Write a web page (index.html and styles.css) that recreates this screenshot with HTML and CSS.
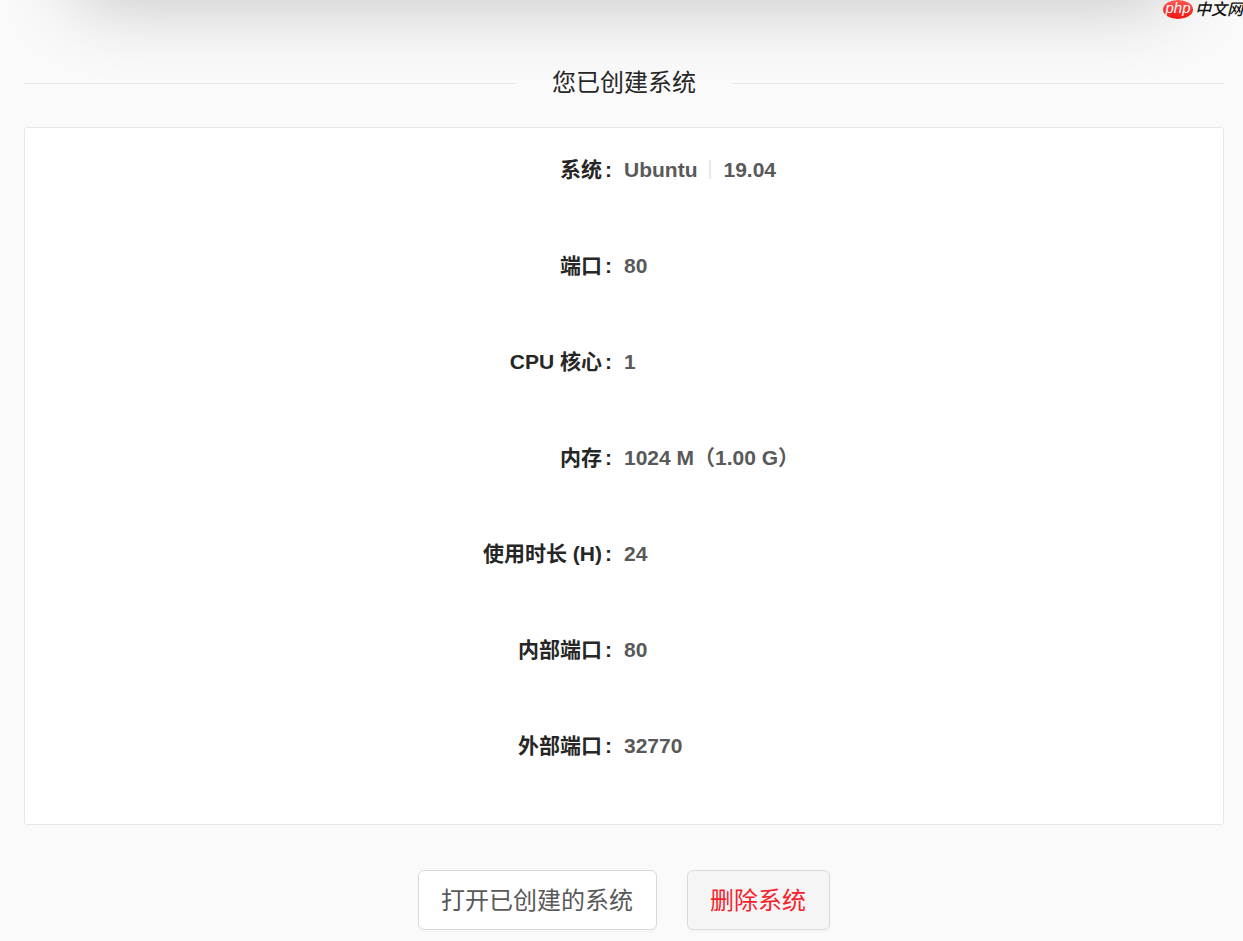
FILE: index.html
```html
<!DOCTYPE html>
<html lang="zh-CN">
<head>
  <meta charset="utf-8">
  <meta name="viewport" content="width=device-width, initial-scale=1">
  <title>您已创建系统</title>
  <link rel="stylesheet" href="styles.css">
</head>
<body>
  <div class="overhang" aria-hidden="true"></div>
  <div class="brand"><span class="brand-badge">php</span><span class="brand-name">中文网</span></div>
  <main class="page">
    <h1 class="divider-title">您已创建系统</h1>
    <dl class="details">
      <div class="row"><dt>系统</dt><dd>Ubuntu<span class="bar"></span>19.04</dd></div>
      <div class="row"><dt>端口</dt><dd>80</dd></div>
      <div class="row"><dt>CPU 核心</dt><dd>1</dd></div>
      <div class="row"><dt>内存</dt><dd>1024 M（1.00 G）</dd></div>
      <div class="row"><dt>使用时长 (H)</dt><dd>24</dd></div>
      <div class="row"><dt>内部端口</dt><dd>80</dd></div>
      <div class="row"><dt>外部端口</dt><dd>32770</dd></div>
    </dl>
    <div class="actions">
      <button type="button" class="btn">打开已创建的系统</button>
      <button type="button" class="btn btn-danger">删除系统</button>
    </div>
  </main>
</body>
</html>
```
FILE: styles.css
```css
* {
  box-sizing: border-box;
}

body {
  position: relative;
  margin: 0;
  overflow-x: hidden;
  background: #fafafa;
  color: #262626;
  font-family: "Liberation Sans", "Noto Sans CJK SC", sans-serif;
}

/* Panel above the visible area; only its shadow reaches the page. */
.overhang {
  position: absolute;
  bottom: 100%;
  left: 76px;
  right: 71px;
  height: 200px;
  box-shadow: 0 0 80px rgba(0, 0, 0, 0.24);
}

.brand {
  position: absolute;
  top: 0;
  right: 0;
  display: flex;
  align-items: center;
  gap: 2px;
  height: 19px;
  color: #111;
  font-style: italic;
  line-height: 19px;
  white-space: nowrap;
}

.brand-badge {
  width: 30px;
  height: 19px;
  border-radius: 50%;
  background: linear-gradient(#ff5a50, #f01414);
  color: #fff;
  font-size: 15px;
  line-height: 16px;
  text-align: center;
}

.brand-name {
  font-size: 16px;
  font-weight: 500;
}

.page {
  position: relative;
  padding: 65px 19px 11px 24px;
}

.divider-title {
  display: flex;
  align-items: center;
  gap: 36px;
  margin: 0 0 26px;
  font-size: 24px;
  font-weight: 400;
  line-height: 36px;
}

.divider-title::before,
.divider-title::after {
  content: "";
  flex: 1;
  height: 1px;
  background: #e8e8e8;
}

.details {
  margin: 0;
  padding: 12px 0;
  border: 1px solid #e8e8e8;
  border-radius: 3px;
  background: #fff;
  font-size: 21px;
  font-weight: bold;
  line-height: 60px;
}

.row {
  display: grid;
  grid-template-columns: 1fr 1fr;
  height: 60px;
  margin-bottom: 36px;
}

.row dt {
  padding-right: 12px;
  text-align: right;
}

.row dt::after {
  content: ":";
  margin-left: 3px;
}

.row dd {
  margin: 0;
  color: #595959;
}

.bar {
  display: inline-block;
  width: 2px;
  height: 19px;
  margin: 0 12px;
  background: #e8e8e8;
  vertical-align: -2px;
}

.actions {
  display: flex;
  justify-content: center;
  gap: 30px;
  margin-top: 45px;
}

.btn {
  height: 60px;
  padding: 0 23px 4px 22px;
  border: 1px solid #d9d9d9;
  border-radius: 6px;
  background: #fff;
  box-shadow: 0 3px 0 rgba(0, 0, 0, 0.016);
  color: #595959;
  font-family: inherit;
  font-size: 24px;
  cursor: pointer;
}

.btn-danger {
  background: #f5f5f5;
  color: #f5222d;
}
```
